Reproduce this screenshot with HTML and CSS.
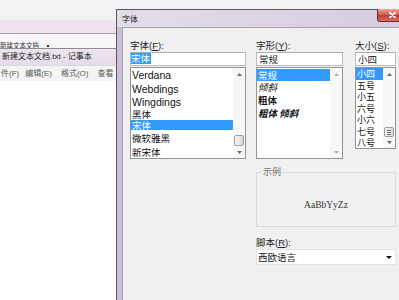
FILE: index.html
```html
<!DOCTYPE html>
<html>
<head>
<meta charset="utf-8">
<link rel="stylesheet" href="styles.css">
</head>
<body>
<div class="desk">
  <div class="bar-top"></div>
  <div class="bar-pink"></div>
  <div class="bar-tab"><span class="tab-text">新建文本文档</span><span class="tab-dot"></span></div>
  <div class="np-title">新建文本文档.txt - 记事本</div>
  <div class="np-menu"><span class="m1">件(F)</span><span>编辑(E)</span><span>格式(O)</span><span>查看</span></div>
  <div class="np-body"></div>
</div>

<div class="dlg">
  <div class="dlg-title">字体</div>
  <div class="dlg-close"><svg width="7" height="6" viewBox="0 0 7 6"><path d="M0.8 0.6 L6.2 5.4 M6.2 0.6 L0.8 5.4" stroke="#fff" stroke-width="1.7" stroke-linecap="round"/></svg></div>
  <div class="client">
    <div class="col col-font">
      <div class="lbl">字体(<u>F</u>):</div>
      <div class="inp"><span class="sel-text">宋体</span></div>
      <div class="list list-font">
        <div class="items">
          <div class="it lat r14">Verdana</div>
          <div class="it lat r14">Webdings</div>
          <div class="it lat r13">Wingdings</div>
          <div class="it cjk r11">黑体</div>
          <div class="it cjk r10 on">宋体</div>
          <div class="it cjk r17">微软雅黑</div>
          <div class="it cjk r11">新宋体</div>
        </div>
        <div class="sb">
          <div class="arr up"><svg width="5" height="3" viewBox="0 0 5 3"><path d="M0 3 L2.5 0 L5 3Z" fill="#6a6a6a"/></svg></div>
          <div class="track"><div class="thumb"></div></div>
          <div class="arr dn"><svg width="5" height="3" viewBox="0 0 5 3"><path d="M0 0 L2.5 3 L5 0Z" fill="#6a6a6a"/></svg></div>
        </div>
      </div>
    </div>

    <div class="right">
      <div class="row">
        <div class="col col-style">
          <div class="lbl">字形(<u>Y</u>):</div>
          <div class="inp"><span class="val">常规</span></div>
          <div class="list list-style">
            <div class="items">
              <div class="it cjk s12 on">常规</div>
              <div class="it cjk s13 ital">倾斜</div>
              <div class="it cjk s13 bold">粗体</div>
              <div class="it cjk s13 bold ital">粗体 倾斜</div>
            </div>
            <div class="sb">
              <div class="arr up"><svg width="5" height="3" viewBox="0 0 5 3"><path d="M0 3 L2.5 0 L5 3Z" fill="#b0b0b0"/></svg></div>
              <div class="track"></div>
              <div class="arr dn"><svg width="5" height="3" viewBox="0 0 5 3"><path d="M0 0 L2.5 3 L5 0Z" fill="#b0b0b0"/></svg></div>
            </div>
          </div>
        </div>
        <div class="col col-size">
          <div class="lbl">大小(<u>S</u>):</div>
          <div class="inp"><span class="val">小四</span></div>
          <div class="list list-size">
            <div class="items">
              <div class="it cjk z on">小四</div>
              <div class="it cjk z">五号</div>
              <div class="it cjk z">小五</div>
              <div class="it cjk z">六号</div>
              <div class="it cjk z">小六</div>
              <div class="it cjk z">七号</div>
              <div class="it cjk z">八号</div>
            </div>
            <div class="sb">
              <div class="arr up"><svg width="5" height="3" viewBox="0 0 5 3"><path d="M0 3 L2.5 0 L5 3Z" fill="#6a6a6a"/></svg></div>
              <div class="track"><div class="thumb grip"><i></i><i></i><i></i></div></div>
              <div class="arr dn small"><svg width="5" height="3" viewBox="0 0 5 3"><path d="M0 0 L2.5 3 L5 0Z" fill="#6a6a6a"/></svg></div>
            </div>
          </div>
        </div>
      </div>

      <fieldset class="sample">
        <legend>示例</legend>
        <div class="sample-text">AaBbYyZz</div>
      </fieldset>

      <div class="lbl lbl-script">脚本(<u>R</u>):</div>
      <div class="combo"><span>西欧语言</span><svg width="6" height="3" viewBox="0 0 6 3"><path d="M0 0 L3 3 L6 0Z" fill="#111"/></svg></div>
    </div>
  </div>
</div>
</body>
</html>
```

FILE: styles.css
```css
* { box-sizing: border-box; margin: 0; padding: 0; }
html, body { width: 399px; height: 300px; overflow: hidden; }
body {
  position: relative;
  background: #fff;
  font-family: "Liberation Sans", "Noto Sans CJK SC", sans-serif;
  color: #1a1a1a;
}

/* background notepad window */
.bar-top { height: 20px; background: #f3f2f3; }
.bar-pink { height: 14px; background: #f1e1f0; border-bottom: 1px solid #a49ea6; }
.bar-tab {
  height: 15px;
  background: #f7f5f7;
  overflow: hidden;
  display: flex;
  align-items: flex-start;
  padding-top: 7px;
  border-bottom: 1px solid #8f8a94;
}
.tab-text { font-size: 6.5px; line-height: 9px; color: #333; font-family: "Noto Sans CJK SC", sans-serif; }
.tab-dot { width: 2px; height: 2px; background: #333; margin: 4px 0 0 8px; }
.np-title {
  height: 16px;
  background: linear-gradient(#ede4f0, #e6dbea);
  font-size: 8px;
  line-height: 16px;
  padding-left: 2px;
  color: #222;
}
.np-menu {
  height: 16px;
  background: #f5f4f5;
  display: flex;
  gap: 9px;
  font-size: 8px;
  line-height: 16px;
  color: #5a5a5a;
  padding-left: 1px;
  border-top: 1px solid #dcd6df;
}
.np-menu .m1 { margin-right: -3px; }
.np-body { height: 218px; background: #fff; }

/* dialog */
.dlg {
  position: absolute;
  left: 116px;
  top: 9px;
  width: 300px;
  height: 300px;
  border: 1px solid #5b5663;
  background: #cbbfd8;
  padding: 0 5px;
  display: flex;
  flex-direction: column;
}
.dlg-title {
  height: 17px;
  margin: 0 -5px;
  padding-left: 5px;
  background: linear-gradient(90deg, #e3dde8, #d5cbdf);
  font-family: "Noto Sans CJK SC", sans-serif;
  font-size: 8px;
  line-height: 17px;
  color: #222;
}
.dlg-close {
  position: absolute;
  left: 260px;
  top: -1px;
  width: 30px;
  height: 13px;
  border: 1px solid #6d2a28;
  border-top: none;
  border-radius: 0 0 3px 3px;
  background: linear-gradient(#e9a597, #d66152 45%, #c23a2c 55%, #d5705f);
  display: flex;
  align-items: center;
  justify-content: center;
}
.client {
  flex: 1;
  background: #f0f0f0;
  border-top: 1px solid #aaa0b6;
  border-left: 1px solid #aaa0b6;
  padding: 11px 0 0 7px;
  display: flex;
  align-items: flex-start;
  gap: 10px;
}
.col { display: flex; flex-direction: column; }
.col-font { width: 116px; }
.col-style { width: 87px; }
.col-size { width: 41px; }
.right { width: 140px; display: flex; flex-direction: column; }
.row { display: flex; gap: 12px; align-items: flex-start; }

.lbl {
  height: 13px;
  font-size: 9.5px;
  line-height: 13px;
  color: #1e1e1e;
  white-space: nowrap;
}
.lbl u { text-decoration: underline; text-underline-offset: 1px; }
.inp {
  height: 14px;
  background: #fff;
  border: 1px solid #b9bcc4;
  border-top-color: #a9acb4;
  display: flex;
  align-items: flex-start;
  font-family: "Noto Sans CJK SC", sans-serif;
  font-size: 9.5px;
}
.sel-text { background: #3399ff; color: #fff; height: 11px; line-height: 11px; width: 20px; }
.val { line-height: 12px; padding-left: 2px; color: #222; }

.list {
  margin-top: 1px;
  background: #fff;
  border: 1px solid #8f949b;
  display: flex;
}
.list-font { height: 92px; }
.list-style { height: 92px; }
.list-size { height: 82px; }
.items { flex: 1; min-width: 0; display: flex; flex-direction: column; }
.list-style .items { padding-top: 1px; }
.it { white-space: nowrap; padding-left: 1px; color: #111; }
.lat { font-family: "Liberation Sans", sans-serif; font-size: 10.5px; }
.cjk { font-family: "Noto Sans CJK SC", sans-serif; font-size: 9.5px; }
.it.on { background: #3399ff; color: #fff; }
.r14 { height: 14px; line-height: 14px; }
.r13 { height: 13px; line-height: 13px; }
.r11 { height: 11px; line-height: 11px; }
.r10 { height: 10px; line-height: 10px; }
.r17 { height: 17px; line-height: 17px; }
.s12 { height: 12px; line-height: 12px; }
.s13 { height: 13px; line-height: 13px; }
.z { height: 11.5px; line-height: 11.5px; font-size: 9px; }
.ital { font-style: italic; }
.bold { font-weight: 700; }

.sb {
  width: 12px;
  background: #f7f7f7;
  display: flex;
  flex-direction: column;
}
.arr { height: 12px; display: flex; align-items: center; justify-content: center; }
.arr.small { height: 11px; }
.track { flex: 1; display: flex; flex-direction: column; align-items: center; }
.thumb {
  margin-top: auto;
  width: 10px;
  height: 11px;
  border: 1px solid #9c9c9c;
  border-radius: 2px;
  background: linear-gradient(90deg, #f4f4f4, #dadada);
}
.thumb.grip {
  height: 10px;
  display: flex;
  flex-direction: column;
  align-items: center;
  justify-content: center;
  gap: 1px;
}
.thumb.grip i { display: block; width: 4px; height: 1px; background: #6e6e6e; }

.sample {
  margin-top: 8px;
  height: 60px;
  border: 1px solid #d8d8d8;
  padding: 0;
  min-width: 0;
}
.sample legend {
  margin-left: 5px;
  padding: 0 1px;
  font-family: "Noto Sans CJK SC", sans-serif;
  font-size: 9px;
  line-height: 10px;
  color: #707070;
}
.sample-text {
  padding-top: 21px;
  line-height: 14px;
  text-align: center;
  font-family: "Liberation Serif", serif;
  font-size: 9.5px;
  color: #333;
}
.lbl-script { margin-top: 9px; }
.combo {
  height: 16px;
  background: #fff;
  border: 1px solid #e2e2e2;
  display: flex;
  align-items: center;
  justify-content: space-between;
  padding: 0 3px 0 1px;
  font-family: "Noto Sans CJK SC", sans-serif;
  font-size: 9.5px;
  color: #222;
}
```
